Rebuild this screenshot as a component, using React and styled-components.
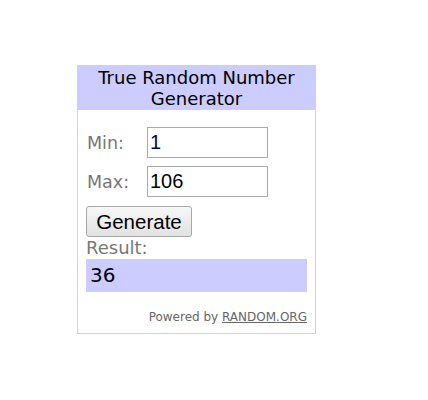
import styled, { createGlobalStyle } from "styled-components";

const GlobalStyle = createGlobalStyle`
  body {
    margin: 0;
    background: #ffffff;
    font-family: "DejaVu Sans", Verdana, sans-serif;
  }
`;

const Page = styled.div`
  padding: 65px 0 0 77px;
  height: 400px;
  box-sizing: border-box;
`;

const Widget = styled.div`
  width: 239px;
  box-sizing: border-box;
  border: 1px solid #ccccff;
  border-top: 0;
`;

const Header = styled.div`
  background: #ccccff;
  height: 45px;
  margin: 0 -1px;
  display: flex;
  align-items: center;
  justify-content: center;
  text-align: center;
  font-size: 18px;
  line-height: 21px;
  color: #000;
`;

const Body = styled.div`
  display: flex;
  flex-direction: column;
  padding: 17px 8px 9px 8px;
`;

const Field = styled.div`
  display: flex;
  align-items: center;
  height: 31px;
  margin-bottom: ${(p) => p.$gap || 0}px;
`;

const Label = styled.span`
  width: 60px;
  font-size: 17.5px;
  color: #777777;
  padding-left: 1px;
`;

const Input = styled.input`
  width: 121px;
  height: 31px;
  box-sizing: border-box;
  border: 1px solid #a9a9a9;
  padding: 0 2px;
  font-family: "Liberation Sans", Arial, sans-serif;
  font-size: 20px;
  color: ${(p) => p.$color || "#000"};
  outline: none;
`;

const Button = styled.button`
  align-self: flex-start;
  width: 106px;
  height: 31px;
  margin-top: 1px;
  border: 1px solid #a8a8a8;
  border-radius: 3px;
  background: linear-gradient(#f7f7f7, #e2e2e2);
  font-family: "Liberation Sans", Arial, sans-serif;
  font-size: 20.5px;
  color: #000;
  padding: 0;
`;

const ResultLabel = styled.div`
  font-size: 18px;
  line-height: 21px;
  color: #777777;
`;

const ResultBox = styled.div`
  margin-top: 1px;
  height: 33px;
  background: #ccccff;
  padding-left: 4px;
  font-size: 20px;
  line-height: 33px;
  color: #000;
`;

const Powered = styled.div`
  margin-top: 18px;
  text-align: right;
  font-size: 12px;
  line-height: 14px;
  color: #666666;

  a {
    color: #666666;
    text-decoration: underline;
  }
`;

export default function App() {
  return (
    <Page>
      <GlobalStyle />
      <Widget>
        <Header>
          True Random Number
          <br />
          Generator
        </Header>
        <Body>
          <Field $gap={8}>
            <Label>Min:</Label>
            <Input defaultValue="1" $color="#000066" />
          </Field>
          <Field $gap={8}>
            <Label>Max:</Label>
            <Input defaultValue="106" />
          </Field>
          <Button>Generate</Button>
          <ResultLabel>Result:</ResultLabel>
          <ResultBox>36</ResultBox>
          <Powered>
            Powered by <a href="#">RANDOM.ORG</a>
          </Powered>
        </Body>
      </Widget>
    </Page>
  );
}
